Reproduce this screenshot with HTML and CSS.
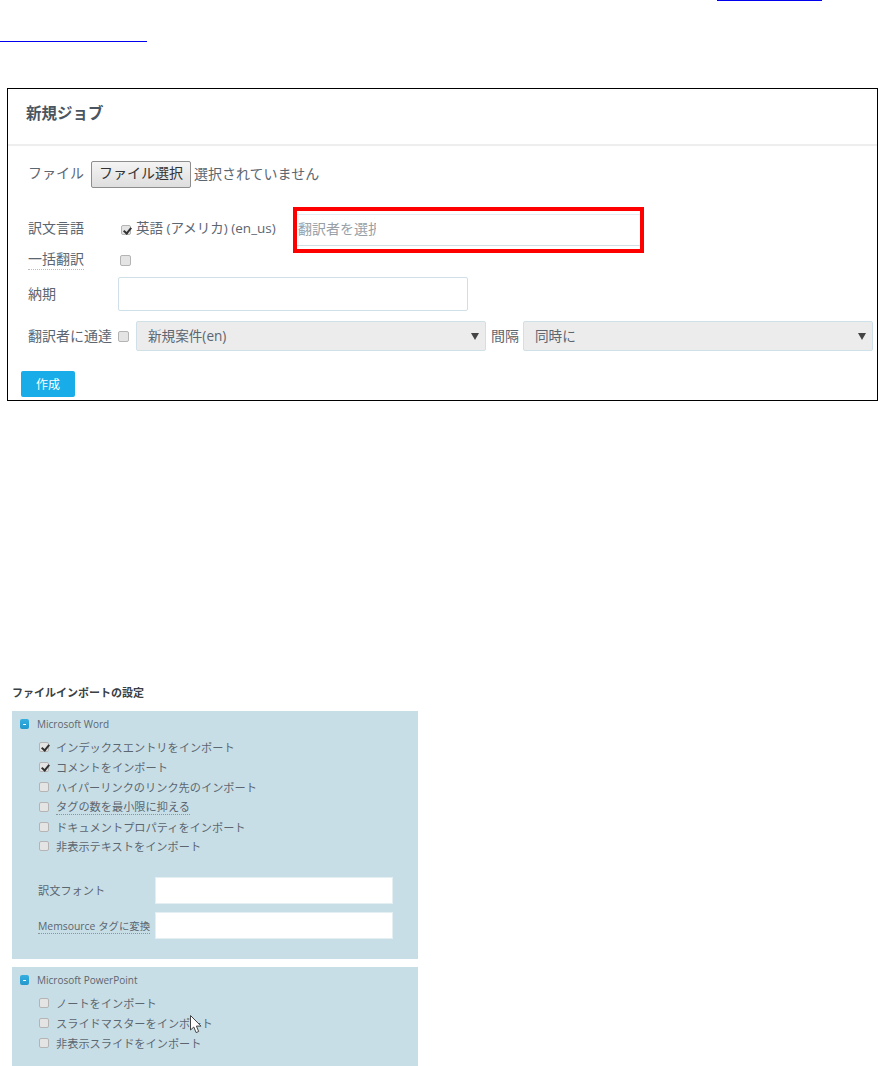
FILE: index.html
```html
<!DOCTYPE html>
<html lang="ja">
<head>
<meta charset="utf-8">
<title>新規ジョブ</title>
<link rel="stylesheet" href="styles.css">
</head>
<body>
<div class="top">
  <div class="link-line link-line-a"></div>
  <div class="link-line link-line-b"></div>
</div>

<section class="job">
  <h2 class="job-title">新規ジョブ</h2>
  <div class="job-body">
    <div class="row row-file">
      <span class="label label-file">ファイル</span>
      <button class="file-btn" type="button">ファイル選択</button>
      <span class="file-none">選択されていません</span>
    </div>
    <div class="row row-lang">
      <span class="label label-lang">訳文言語</span>
      <input class="check check-lang" type="checkbox" checked>
      <span class="lang-name">英語 (アメリカ) (en_us)</span>
      <div class="picker"><input class="picker-input" type="text" placeholder="翻訳者を選択"></div>
    </div>
    <div class="row row-bulk">
      <span class="label label-bulk">一括翻訳</span>
      <input class="check check-bulk" type="checkbox">
    </div>
    <div class="row row-date">
      <span class="label label-date">納期</span>
      <input class="date-input" type="text">
    </div>
    <div class="row row-notify">
      <span class="label label-notify">翻訳者に通達</span>
      <input class="check check-notify" type="checkbox">
      <div class="select"><select><option>新規案件(en)</option></select></div>
      <span class="label label-interval">間隔</span>
      <div class="select"><select><option>同時に</option></select></div>
    </div>
    <button class="create-btn" type="button">作成</button>
  </div>
</section>

<section class="settings">
  <h3 class="settings-title">ファイルインポートの設定</h3>
  <div class="group group-word">
    <div class="group-head"><span class="toggle"></span><span>Microsoft Word</span></div>
    <ul class="options">
      <li><input class="check" type="checkbox" checked><span>インデックスエントリをインポート</span></li>
      <li><input class="check" type="checkbox" checked><span>コメントをインポート</span></li>
      <li><input class="check" type="checkbox"><span>ハイパーリンクのリンク先のインポート</span></li>
      <li><input class="check" type="checkbox"><span class="dotted">タグの数を最小限に抑える</span></li>
      <li><input class="check" type="checkbox"><span>ドキュメントプロパティをインポート</span></li>
      <li><input class="check" type="checkbox"><span>非表示テキストをインポート</span></li>
    </ul>
    <div class="field field-font"><span class="field-label">訳文フォント</span><input class="field-input" type="text"></div>
    <div class="field field-tag"><span class="field-label"><span class="dotted tag-label">Memsource タグに変換</span></span><input class="field-input" type="text"></div>
  </div>
  <div class="group group-ppt">
    <div class="group-head"><span class="toggle"></span><span>Microsoft PowerPoint</span></div>
    <ul class="options">
      <li><input class="check" type="checkbox"><span>ノートをインポート</span></li>
      <li><input class="check" type="checkbox"><span>スライドマスターをインポート</span></li>
      <li><input class="check" type="checkbox"><span>非表示スライドをインポート</span></li>
    </ul>
    <svg class="cursor" width="12" height="19" viewBox="0 0 12 19"><path d="M.5.5v14.5l3.3-3 2.3 5.6 2.6-1.1-2.3-5.4h4.6z" fill="#fff" stroke="#444" stroke-width="1"/></svg>
  </div>
</section>
</body>
</html>
```
FILE: styles.css
```css
* { box-sizing: border-box; }
html, body { margin: 0; padding: 0; height: 1066px; overflow: hidden; background: #fff; }
body { font-family: "Open Sans", "Noto Sans CJK JP", sans-serif; color: #5c6670; font-size: 14px; }

.top { position: relative; height: 88px; }
.link-line { background: #0000ee; height: 1px; }
.link-line-a { width: 105px; margin-left: 717px; }
.link-line-b { width: 147px; margin-top: 40px; }

.job { margin-left: 7px; width: 871px; height: 313px; border: 1px solid #000; background: #fff; }
.job-title { margin: 0; height: 57px; padding: 13px 0 0 18px; font-size: 15.5px; line-height: 22px; font-weight: 700; color: #4a5560; border-bottom: 2px solid #eeeeee; }
.job-body { padding: 15px 0 0 13px; }
.row { display: flex; align-items: center; }
.label { line-height: 20px; white-space: nowrap; padding-left: 7px; }
.row-file { height: 27px; }
.label-file { width: 70px; padding-bottom: 3px; height: 23px; }
.file-btn { width: 100px; height: 27px; padding: 0 0 5px; font: inherit; color: #333; background: linear-gradient(#f4f4f4, #dedede); border: 1px solid #8e8e8e; border-radius: 2px; }
.file-none { margin-left: 3px; padding-bottom: 3px; }

.check { appearance: none; -webkit-appearance: none; margin: 0; width: 10px; height: 10px; flex: none; border: 1px solid #b4b4b4; border-radius: 2px; background: #e4e4e4; position: relative; }
.check:checked::after { content: ""; position: absolute; left: 3px; top: 0; width: 3px; height: 6px; border: solid #333; border-width: 0 2px 2px 0; transform: rotate(40deg); }

.row-lang { height: 32px; margin-top: 26px; }
.label-lang { width: 100px; height: 25px; padding-bottom: 5px; }
.check-lang { margin-right: 5px; }
.lang-name { font-size: 13.5px; width: 161px; white-space: nowrap; padding-bottom: 6px; }
.picker { position: relative; width: 343px; height: 32px; border-top: 1px solid #e3eef2; border-bottom: 1px solid #cfdfe6; }
.picker::after { content: ""; position: absolute; inset: -8px -4px; border: 4px solid #f00; pointer-events: none; }
.picker-input { display: block; width: 78px; height: 26px; margin-left: 1px; padding: 0; border: 0; outline: 0; font: inherit; font-size: 14px; background: transparent; }
.picker-input::placeholder { color: #98a0a6; opacity: 1; }

.row-bulk { height: 20px; margin-top: 4px; }
.label-bulk { width: 100px; position: relative; padding-bottom: 1px; height: 20px; line-height: 18px; }
.label-bulk::after { content: ""; position: absolute; left: 7px; width: 56px; bottom: 0; border-bottom: 1px dotted #bbb; }
.check-bulk { margin-left: -1px; width: 11px; height: 11px; }

.row-date { height: 34px; margin-top: 7px; }
.label-date { width: 97px; }
.date-input { width: 350px; height: 34px; border: 1px solid #cfe0e8; border-radius: 2px; background: #fff; padding: 0; }

.row-notify { height: 30px; margin-top: 10px; }
.label-notify { width: 97px; }
.check-notify { width: 11px; height: 11px; margin-right: 7px; }
.select { position: relative; width: 350px; height: 30px; }
.select select { appearance: none; -webkit-appearance: none; display: block; width: 100%; height: 100%; padding: 0 0 2px 11px; font: inherit; font-size: 13.6px; color: #5c6670; background: #ececec; border: 1px solid #cfe0e8; border-radius: 2px; }
.select::after { content: ""; position: absolute; top: 12px; right: 7px; border: 4px solid transparent; border-top: 7px solid #444; border-bottom: 0; }
.label-interval { padding: 0; margin: 0 4px 0 5px; width: 28px; }

.create-btn { display: block; width: 54px; height: 26px; margin: 20px 0 0 0; padding: 0; border: 0; border-radius: 2px; background: #18ade9; color: #fff; font: inherit; font-size: 12px; }

.settings { margin: 285px 0 0 12px; width: 406px; font-size: 11.2px; }
.settings-title { margin: 0; padding: 0; font-size: 11px; line-height: 14px; font-weight: 700; color: #3a3f44; }
.group { background: #c8dee6; }
.group-word { margin-top: 11px; height: 248px; padding-top: 8px; }
.group-ppt { position: relative; margin-top: 8px; height: 99px; padding-top: 8px; }
.group-head { display: flex; align-items: center; height: 10px; padding-left: 8px; font-size: 10px; }
.toggle { width: 9px; height: 10px; margin-right: 8px; border-radius: 2px; background: linear-gradient(#35aee0, #2398cc); position: relative; flex: none; }
.toggle::after { content: ""; position: absolute; left: 3px; right: 3px; top: 5px; height: 1px; background: #fff; }
.options { list-style: none; margin: 8.5px 0 0; padding: 0 0 0 27px; }
.options li { display: flex; align-items: center; height: 19.8px; }
.options .check { margin-right: 7px; }
.dotted { border-bottom: 1px dotted #8a959c; }

.field { display: flex; align-items: center; height: 27px; padding-left: 26px; }
.field-font { margin-top: 20.5px; }
.field-tag { margin-top: 8px; }
.field-label { width: 117px; white-space: nowrap; }
.tag-label { font-size: 10.4px; }
.field-input { width: 238px; height: 27px; padding: 0; border: 1px solid #e4eff3; background: #fff; }

.cursor { position: absolute; left: 178px; top: 48px; }
```
